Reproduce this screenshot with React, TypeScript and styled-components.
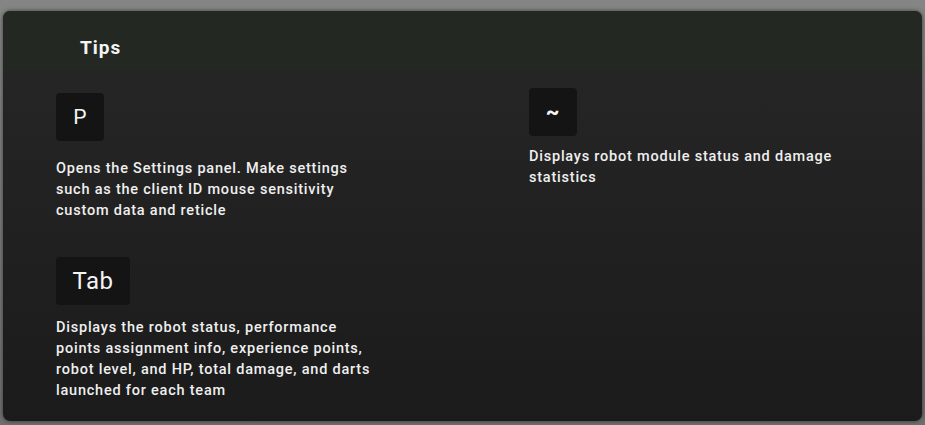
import React from "react";
import styled, { createGlobalStyle } from "styled-components";

const Global = createGlobalStyle`
  html, body { margin: 0; padding: 0; }
  body {
    background: #7e7e7e;
    font-family: "Roboto", "Liberation Sans", sans-serif;
    width: 925px;
    height: 425px;
    overflow: hidden;
  }
`;

const Page = styled.div`
  width: 925px;
  height: 425px;
  box-sizing: border-box;
  padding: 11px 3px 4px 3px;
  background: linear-gradient(180deg, #858585 0%, #6f6f6f 100%);
`;

const Panel = styled.section`
  height: 100%;
  border-radius: 7px;
  overflow: hidden;
  display: flex;
  flex-direction: column;
  background: linear-gradient(180deg, #272727 0%, #1b1b1b 100%);
  box-shadow: 0 0 4px rgba(0, 0, 0, 0.55);
`;

const Header = styled.header`
  height: 59px;
  flex: none;
  box-sizing: border-box;
  display: flex;
  align-items: flex-start;
  padding: 26px 0 0 77px;
  background: #232822;
`;

const Title = styled.h1`
  margin: 0;
  font-size: 19px;
  line-height: 22px;
  font-weight: 700;
  letter-spacing: 1px;
  color: #f4f4f4;
`;

const Body = styled.div`
  display: grid;
  grid-template-columns: 473px 1fr;
  padding-left: 53px;
`;

const Column = styled.div<{ $top: number }>`
  display: flex;
  flex-direction: column;
  padding-top: ${(p) => p.$top}px;
`;

const Tip = styled.div<{ $gap: number; $after: number }>`
  display: flex;
  flex-direction: column;
  align-items: flex-start;
  gap: ${(p) => p.$gap}px;
  margin-bottom: ${(p) => p.$after}px;
`;

const Key = styled.div<{ $w: number; $size: number; $bold?: boolean }>`
  width: ${(p) => p.$w}px;
  height: 48px;
  box-sizing: border-box;
  border-radius: 4px;
  background: #141414;
  color: #f4f4f4;
  display: flex;
  align-items: center;
  justify-content: center;
  font-size: ${(p) => p.$size}px;
  font-weight: ${(p) => (p.$bold ? 900 : 400)};
  letter-spacing: 0.5px;
`;

const Desc = styled.p`
  margin: 0;
  white-space: nowrap;
  font-size: 14.5px;
  line-height: 21px;
  font-weight: 500;
  color: #efefef;
  letter-spacing: 0.78px;
`;

export default function App() {
  return (
    <>
      <Global />
      <Page>
        <Panel>
          <Header>
            <Title>Tips</Title>
          </Header>
          <Body>
            <Column $top={23}>
              <Tip $gap={17} $after={36}>
                <Key $w={48} $size={21}>P</Key>
                <Desc>
                  Opens the Settings panel. Make settings
                  <br />
                  such as the client ID mouse sensitivity
                  <br />
                  custom data and reticle
                </Desc>
              </Tip>
              <Tip $gap={12} $after={0}>
                <Key $w={74} $size={24}>Tab</Key>
                <Desc>
                  Displays the robot status, performance
                  <br />
                  points assignment info, experience points,
                  <br />
                  robot level, and HP, total damage, and darts
                  <br />
                  launched for each team
                </Desc>
              </Tip>
            </Column>
            <Column $top={18}>
              <Tip $gap={10} $after={0}>
                <Key $w={48} $size={21} $bold>~</Key>
                <Desc>
                  Displays robot module status and damage
                  <br />
                  statistics
                </Desc>
              </Tip>
            </Column>
          </Body>
        </Panel>
      </Page>
    </>
  );
}
